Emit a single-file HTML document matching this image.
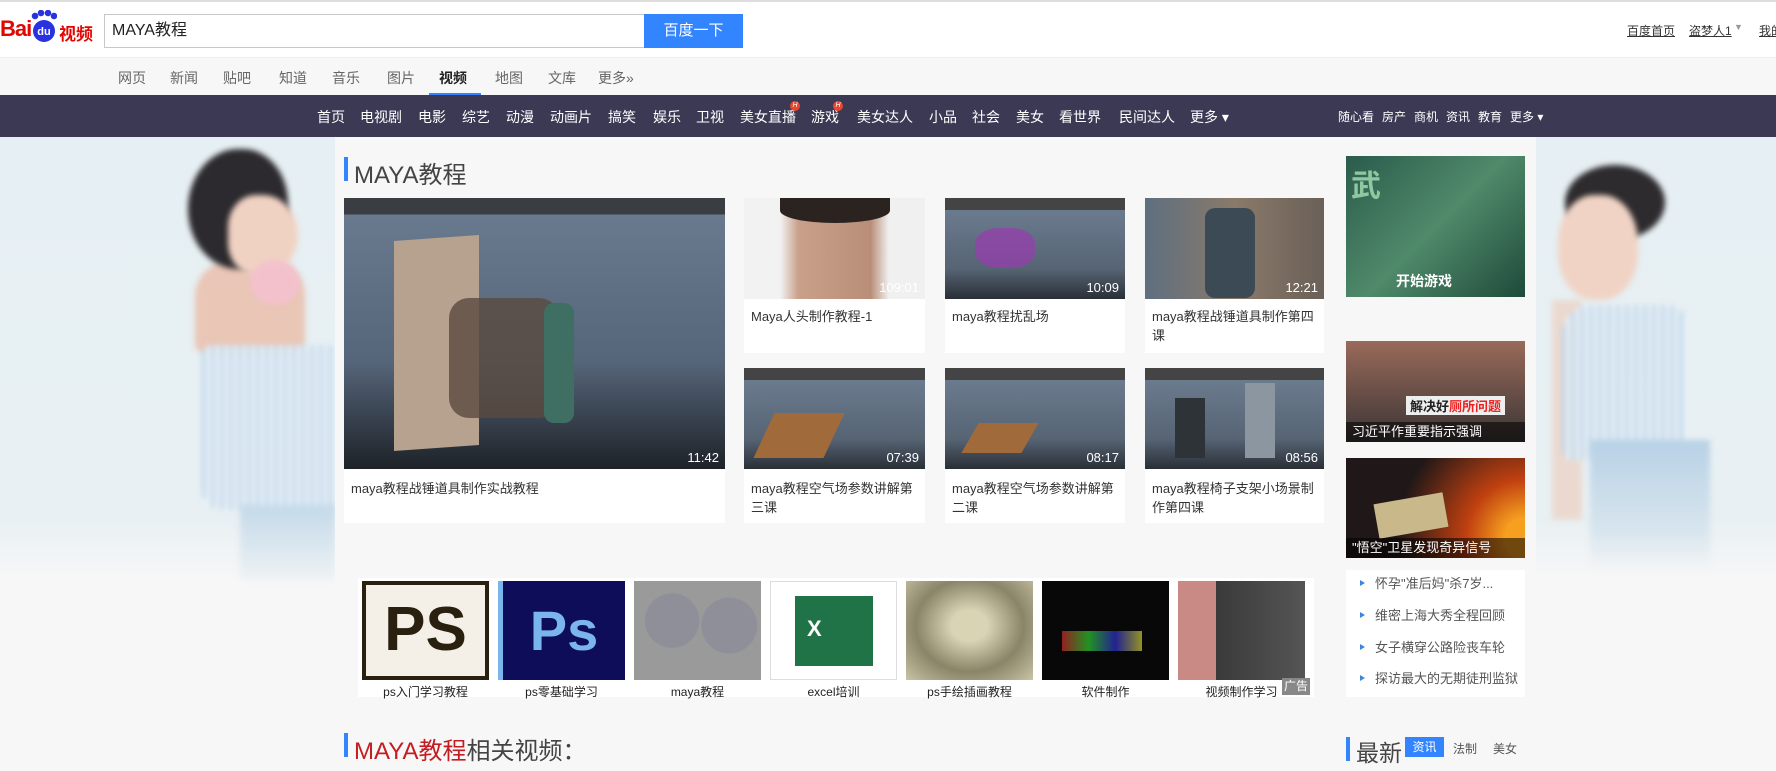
<!DOCTYPE html>
<html><head><meta charset="utf-8">
<style>
*{margin:0;padding:0;box-sizing:border-box}
body{width:1776px;height:771px;overflow:hidden;position:relative;background:#f7f7f7;font-family:"Liberation Sans","Noto Sans CJK SC",sans-serif;color:#333}
.abs{position:absolute}
.top{left:0;top:0;width:1776px;height:57px;background:#fff;border-top:2px solid #ddd}
.top div{white-space:nowrap}
.tabs{left:0;top:57px;width:1776px;height:38px;background:#f7f7f7;border-top:1px solid #eee}
.tabs span{position:absolute;top:10px;font-size:14px;color:#666}
.nav{left:0;top:95px;width:1776px;height:42px;background:#3b3954}
.nav span{position:absolute;top:12px;font-size:14px;color:#fff;white-space:nowrap}
.nav .s{font-size:12px;top:13px}
.h{position:absolute;top:-6px;right:-4px;width:10px;height:10px;border-radius:50%;background:#e8462e;font-size:7px;line-height:10px;text-align:center;color:#fff}
.bgside{top:137px;height:634px;background:linear-gradient(#e6eff3 0%,#e8f0f3 60%,#f7f7f7 70%)}
.main{left:335px;top:137px;width:1201px;height:634px;background:#f7f7f7}
.card{position:absolute;background:#fff}
.th{position:absolute;left:0;top:0;width:100%;overflow:hidden}
.dur{position:absolute;right:6px;bottom:4px;color:#fff;font-size:13px}
.ct{position:absolute;left:7px;font-size:13px;color:#333;line-height:19px;width:165px}
.maya{background:linear-gradient(#444 0 12%,#6b7b8e 12%,#566474 70%,#2a2f36 100%)}
.ad{position:absolute;top:3px;width:127px;height:116px}
.ad .im{width:127px;height:99px}
.ad p{text-align:center;font-size:12px;color:#222;margin-top:3px}
.li{position:absolute;left:1360px;font-size:13px;color:#555}
.li:before{content:"";display:inline-block;border-left:5px solid #3d86d8;border-top:3px solid transparent;border-bottom:3px solid transparent;margin-right:10px;vertical-align:2px}
.g{filter:blur(3px)}
</style></head><body>
<div class="abs bgside" style="left:0;width:335px"></div>
<div class="abs bgside" style="left:1536px;width:240px"></div>
<!-- left girl -->
<div class="abs g" style="left:195px;top:258px;width:110px;height:95px;background:#e9c6b6;border-radius:40% 40% 10% 10%"></div>
<div class="abs g" style="left:188px;top:149px;width:100px;height:120px;background:#2c2a2e;border-radius:50% 45% 40% 50%"></div>
<div class="abs g" style="left:228px;top:195px;width:70px;height:80px;background:#f0d2c3;border-radius:40% 50% 50% 40%"></div>
<div class="abs g" style="left:250px;top:260px;width:50px;height:45px;background:#f3c1cc;border-radius:50%"></div>
<div class="abs g" style="left:202px;top:345px;width:133px;height:165px;background:repeating-linear-gradient(90deg,#b9d3e8 0 4px,#eef4f9 4px 9px);border-radius:10px 0 0 20px;opacity:.9"></div>
<div class="abs g" style="left:240px;top:505px;width:95px;height:75px;background:linear-gradient(#c3d9e9,#eef2f4)"></div>
<!-- right girl -->
<div class="abs g" style="left:1565px;top:165px;width:100px;height:75px;background:#2e2b2e;border-radius:50%"></div>
<div class="abs g" style="left:1558px;top:195px;width:80px;height:105px;background:#f0d3c4;border-radius:45%"></div>
<div class="abs g" style="left:1552px;top:300px;width:30px;height:220px;background:#ecd4c8;opacity:.8"></div>
<div class="abs g" style="left:1562px;top:305px;width:125px;height:155px;background:repeating-linear-gradient(90deg,#b6d1e6 0 4px,#eef4f9 4px 9px);border-radius:30px 20px 10px 10px;opacity:.9"></div>
<div class="abs g" style="left:1590px;top:440px;width:120px;height:130px;background:linear-gradient(#b7d1e5,#d8e5ee 70%,#f3f5f6)"></div>

<div class="abs top">
 <div class="abs" style="left:0;top:14px;font-size:22px;font-weight:bold;color:#e10601;letter-spacing:-1px">Bai</div>
 <div class="abs" style="left:33px;top:18px;width:22px;height:22px;border-radius:50%;background:#2932e1;color:#fff;font-size:11px;text-align:center;line-height:24px;font-weight:bold">du</div>
 <div class="abs" style="left:31px;top:8px;width:26px;height:10px;background:radial-gradient(circle at 4px 6px,#2932e1 3px,transparent 3.5px),radial-gradient(circle at 10px 3px,#2932e1 3px,transparent 3.5px),radial-gradient(circle at 17px 3px,#2932e1 3px,transparent 3.5px),radial-gradient(circle at 23px 6px,#2932e1 3px,transparent 3.5px)"></div>
 <div class="abs" style="left:59px;top:18px;font-size:17px;color:#e10601;font-weight:bold">视频</div>
 <div class="abs" style="left:104px;top:12px;width:541px;height:34px;border:1px solid #c8c8c8;padding-left:7px;line-height:32px;font-size:16px;color:#222">MAYA教程</div>
 <div class="abs" style="left:644px;top:12px;width:99px;height:34px;background:#3385ff;color:#fff;font-size:15px;line-height:34px;text-align:center">百度一下</div>
 <div class="abs" style="left:1627px;top:20px;font-size:12px;color:#333;text-decoration:underline">百度首页</div>
 <div class="abs" style="left:1689px;top:20px;font-size:12px;color:#333;text-decoration:underline">盗梦人1</div>
 <div class="abs" style="left:1734px;top:20px;font-size:9px;color:#999">▼</div>
 <div class="abs" style="left:1759px;top:20px;font-size:12px;color:#333;text-decoration:underline">我的</div>
</div>
<div class="abs tabs">
 <span style="left:118px">网页</span><span style="left:170px">新闻</span><span style="left:223px">贴吧</span><span style="left:279px">知道</span><span style="left:332px">音乐</span><span style="left:387px">图片</span><span style="left:439px;color:#222;font-weight:bold">视频</span><span style="left:495px">地图</span><span style="left:548px">文库</span><span style="left:598px">更多»</span>
 <div class="abs" style="left:429px;top:35px;width:52px;height:3px;background:#3385ff"></div>
</div>
<div class="abs nav">
 <span style="left:317px">首页</span><span style="left:360px">电视剧</span><span style="left:418px">电影</span><span style="left:462px">综艺</span><span style="left:506px">动漫</span><span style="left:550px">动画片</span><span style="left:608px">搞笑</span><span style="left:653px">娱乐</span><span style="left:696px">卫视</span><span style="left:740px">美女直播<i class="h">H</i></span><span style="left:811px">游戏<i class="h">H</i></span><span style="left:857px">美女达人</span><span style="left:929px">小品</span><span style="left:972px">社会</span><span style="left:1016px">美女</span><span style="left:1059px">看世界</span><span style="left:1119px">民间达人</span><span style="left:1190px">更多 ▾</span>
 <span class="s" style="left:1338px">随心看</span><span class="s" style="left:1382px">房产</span><span class="s" style="left:1414px">商机</span><span class="s" style="left:1446px">资讯</span><span class="s" style="left:1478px">教育</span><span class="s" style="left:1510px">更多 ▾</span>
</div>
<div class="abs main"></div>

<div class="abs" style="left:344px;top:157px;width:4px;height:24px;background:#3385ff"></div>
<div class="abs" style="left:354px;top:155px;font-size:24px;color:#444">MAYA教程</div>

<!-- big -->
<div class="card" style="left:344px;top:198px;width:381px;height:325px">
 <div class="th maya" style="height:271px;background:linear-gradient(#3a3d42 0 6%,#6a7a8e 6%,#56667a 60%,#1e2228 100%)">
  <div class="abs" style="left:50px;top:40px;width:85px;height:210px;background:#b7a28f;transform:skewY(-4deg)"></div>
  <div class="abs" style="left:105px;top:100px;width:110px;height:120px;background:#5a4a3e;border-radius:20px;opacity:.8"></div>
  <div class="abs" style="left:200px;top:105px;width:30px;height:120px;background:#3f6f62;border-radius:10px"></div>
  <span class="dur">11:42</span></div>
 <div class="ct" style="top:281px;width:360px">maya教程战锤道具制作实战教程</div>
</div>
<!-- small row1 -->
<div class="card" style="left:744px;top:198px;width:181px;height:155px"><div class="th" style="height:101px;background:linear-gradient(90deg,#f2f2f2 0 20%,#c9a08a 30%,#b98e78 70%,#f0f0f0 80%)"><div class="abs" style="left:36px;top:0;width:110px;height:25px;background:#2a2320;border-radius:0 0 50% 50%"></div><span class="dur">109:01</span></div><div class="ct" style="top:109px">Maya人头制作教程-1</div></div>
<div class="card" style="left:945px;top:198px;width:180px;height:155px"><div class="th maya" style="height:101px"><div class="abs" style="left:30px;top:30px;width:60px;height:40px;background:#9a3bb0;opacity:.7;border-radius:40%"></div><span class="dur">10:09</span></div><div class="ct" style="top:109px">maya教程扰乱场</div></div>
<div class="card" style="left:1145px;top:198px;width:179px;height:155px"><div class="th" style="height:101px;background:linear-gradient(90deg,#5e6f80,#8a7a6a 50%,#6a6058)"><div class="abs" style="left:60px;top:10px;width:50px;height:90px;background:#3c4a56;border-radius:10px"></div><span class="dur">12:21</span></div><div class="ct" style="top:109px">maya教程战锤道具制作第四课</div></div>
<!-- row2 -->
<div class="card" style="left:744px;top:368px;width:181px;height:155px"><div class="th maya" style="height:101px"><div class="abs" style="left:20px;top:45px;width:70px;height:45px;background:#a06a3a;transform:skewX(-25deg)"></div><span class="dur">07:39</span></div><div class="ct" style="top:111px">maya教程空气场参数讲解第三课</div></div>
<div class="card" style="left:945px;top:368px;width:180px;height:155px"><div class="th maya" style="height:101px"><div class="abs" style="left:25px;top:55px;width:60px;height:30px;background:#a06a3a;transform:skewX(-30deg)"></div><span class="dur">08:17</span></div><div class="ct" style="top:111px">maya教程空气场参数讲解第二课</div></div>
<div class="card" style="left:1145px;top:368px;width:179px;height:155px"><div class="th maya" style="height:101px"><div class="abs" style="left:30px;top:30px;width:30px;height:60px;background:#2e3338"></div><div class="abs" style="left:100px;top:15px;width:30px;height:75px;background:#8b96a0"></div><span class="dur">08:56</span></div><div class="ct" style="top:111px">maya教程椅子支架小场景制作第四课</div></div>

<!-- ads row -->
<div class="card" style="left:358px;top:578px;width:956px;height:119px">
 <div class="ad" style="left:4px"><div class="im" style="background:#f4f0e8;border:4px solid #2a2010;font:bold 62px 'Liberation Sans';color:#2a2010;text-align:center;line-height:90px">PS</div><p>ps入门学习教程</p></div>
 <div class="ad" style="left:140px"><div class="im" style="background:#0d0d5a;border-left:5px solid #7ab5ee;font:bold 56px 'Liberation Sans';color:#7ab5ee;text-align:center;line-height:99px">Ps</div><p>ps零基础学习</p></div>
 <div class="ad" style="left:276px"><div class="im" style="background:radial-gradient(circle at 30% 40%,#8f8f9a 25%,transparent 26%),radial-gradient(circle at 75% 45%,#8f8f9a 25%,transparent 26%),#9a9a9a"></div><p>maya教程</p></div>
 <div class="ad" style="left:412px"><div class="im" style="background:#fff;border:1px solid #ddd;padding:14px 24px"><div style="width:78px;height:70px;background:#1f7346;color:#fff;font:bold 22px 'Liberation Sans';padding:20px 0 0 12px">X</div></div><p>excel培训</p></div>
 <div class="ad" style="left:548px"><div class="im" style="background:radial-gradient(ellipse at 50% 45%,#d8d4b4 20%,#8a8468 60%,#c9c4a6)"></div><p>ps手绘插画教程</p></div>
 <div class="ad" style="left:684px"><div class="im" style="background:#080808"><div style="position:relative;top:50px;left:20px;width:80px;height:20px;background:linear-gradient(90deg,#e33,#3e3,#33e,#ee3);opacity:.6"></div></div><p>软件制作</p></div>
 <div class="ad" style="left:820px"><div class="im" style="background:linear-gradient(90deg,#c98a86 0 30%,#3a3a3a 30%,#555 100%)"></div><p>视频制作学习</p></div>
 <div class="abs" style="left:924px;top:100px;width:28px;height:17px;background:#888;color:#fff;font-size:12px;text-align:center;line-height:17px">广告</div>
</div>

<div class="abs" style="left:344px;top:733px;width:4px;height:24px;background:#3385ff"></div>
<div class="abs" style="left:354px;top:731px;font-size:24px;color:#444"><span style="color:#c41c20">MAYA教程</span>相关视频：</div>

<!-- sidebar -->
<div class="abs" style="left:1346px;top:156px;width:179px;height:141px;background:linear-gradient(135deg,#2b5b4c,#4f8a6a 50%,#1f4a3a)"><div class="abs" style="left:50px;top:115px;font-size:14px;font-weight:bold;color:#fff">开始游戏</div><div class="abs" style="left:5px;top:5px;font-size:30px;color:#8fc8a0;font-weight:bold">武</div></div>
<div class="abs" style="left:1346px;top:341px;width:179px;height:101px;background:linear-gradient(#9a6a5a,#3a3535)"><div class="abs" style="left:60px;top:55px;font-size:13px;font-weight:bold;color:#222;background:#eee;padding:0 4px">解决好<span style="color:#e22">厕所问题</span></div><div class="abs" style="left:0;bottom:0;width:179px;height:20px;background:rgba(0,0,0,.55);color:#fff;font-size:13px;padding-left:6px;line-height:20px">习近平作重要指示强调</div></div>
<div class="abs" style="left:1346px;top:458px;width:179px;height:100px;background:radial-gradient(circle at 100% 80%,#f7a020 10%,#c04010 30%,#201818 65%)"><div class="abs" style="left:30px;top:40px;width:70px;height:35px;background:#c8b88a;transform:rotate(-10deg)"></div><div class="abs" style="left:0;bottom:0;width:179px;height:20px;background:rgba(0,0,0,.55);color:#fff;font-size:13px;padding-left:6px;line-height:20px">"悟空"卫星发现奇异信号</div></div>
<div class="abs" style="left:1346px;top:570px;width:179px;height:127px;background:#fff"></div>
<div class="li" style="top:573px">怀孕"准后妈"杀7岁...</div>
<div class="li" style="top:605px">维密上海大秀全程回顾</div>
<div class="li" style="top:637px">女子横穿公路险丧车轮</div>
<div class="li" style="top:668px">探访最大的无期徒刑监狱</div>
<div class="abs" style="left:1346px;top:737px;width:4px;height:24px;background:#3385ff"></div>
<div class="abs" style="left:1356px;top:734px;font-size:23px;color:#444">最新</div>
<div class="abs" style="left:1405px;top:737px;width:39px;height:20px;background:#3385ff;color:#fff;font-size:12px;text-align:center;line-height:20px">资讯</div>
<div class="abs" style="left:1453px;top:740px;font-size:12px;color:#555">法制</div>
<div class="abs" style="left:1493px;top:740px;font-size:12px;color:#555">美女</div>
</body></html>
